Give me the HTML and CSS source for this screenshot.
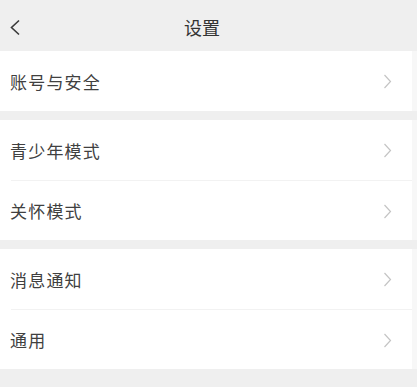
FILE: index.html
```html
<!DOCTYPE html>
<html lang="zh">
<head>
<meta charset="utf-8">
<link rel="stylesheet" href="styles.css">
</head>
<body>
<div class="page">
  <header class="nav">
    <svg class="back" width="12" height="17" viewBox="0 0 12 17"><path d="M10 1.5 L2.5 8.5 L10 15.5" fill="none" stroke="#3a3a3a" stroke-width="1.6"/></svg>
    <div class="title">设置</div>
  </header>
  <section class="group">
    <div class="row"><span class="label">账号与安全</span><svg class="chev" width="9" height="15" viewBox="0 0 9 15"><path d="M1.5 1 L7.5 7.5 L1.5 14" fill="none" stroke="#c4c4c4" stroke-width="1.2"/></svg></div>
  </section>
  <section class="group">
    <div class="row"><span class="label">青少年模式</span><svg class="chev" width="9" height="15" viewBox="0 0 9 15"><path d="M1.5 1 L7.5 7.5 L1.5 14" fill="none" stroke="#c4c4c4" stroke-width="1.2"/></svg></div>
    <div class="row"><span class="label">关怀模式</span><svg class="chev" width="9" height="15" viewBox="0 0 9 15"><path d="M1.5 1 L7.5 7.5 L1.5 14" fill="none" stroke="#c4c4c4" stroke-width="1.2"/></svg></div>
  </section>
  <section class="group">
    <div class="row"><span class="label">消息通知</span><svg class="chev" width="9" height="15" viewBox="0 0 9 15"><path d="M1.5 1 L7.5 7.5 L1.5 14" fill="none" stroke="#c4c4c4" stroke-width="1.2"/></svg></div>
    <div class="row"><span class="label">通用</span><svg class="chev" width="9" height="15" viewBox="0 0 9 15"><path d="M1.5 1 L7.5 7.5 L1.5 14" fill="none" stroke="#c4c4c4" stroke-width="1.2"/></svg></div>
  </section>
</div>
</body>
</html>
```
FILE: styles.css
```css
html, body {
  margin: 0;
  padding: 0;
  background: #efefef;
  font-family: "Noto Sans CJK SC", "Noto Sans", sans-serif;
  color: #404040;
}
.page {
  width: 417px;
  height: 387px;
  overflow: hidden;
}
.nav {
  height: 51px;
  display: flex;
  align-items: center;
  position: relative;
  width: 412px;
}
.back {
  margin-left: 9px;
  margin-top: 3px;
}
.title {
  position: absolute;
  left: 0;
  right: 0;
  text-align: center;
  font-size: 18px;
  line-height: 51px;
  top: 2px;
  padding-right: 8px;
  color: #333;
  pointer-events: none;
}
.group {
  background: #fff;
  width: 412px;
  border-right: 5px solid #f7f7f7;
  margin-bottom: 9px;
}
.row {
  height: 60px;
  display: flex;
  align-items: center;
  justify-content: space-between;
  margin-left: 11px;
  padding-right: 20px;
  box-sizing: border-box;
}
.row + .row {
  border-top: 1px solid #f2f2f2;
}
.label {
  font-size: 17px;
  margin-left: -1px;
  letter-spacing: 1.2px;
}
.chev {
  margin-top: 1px;
}
```
